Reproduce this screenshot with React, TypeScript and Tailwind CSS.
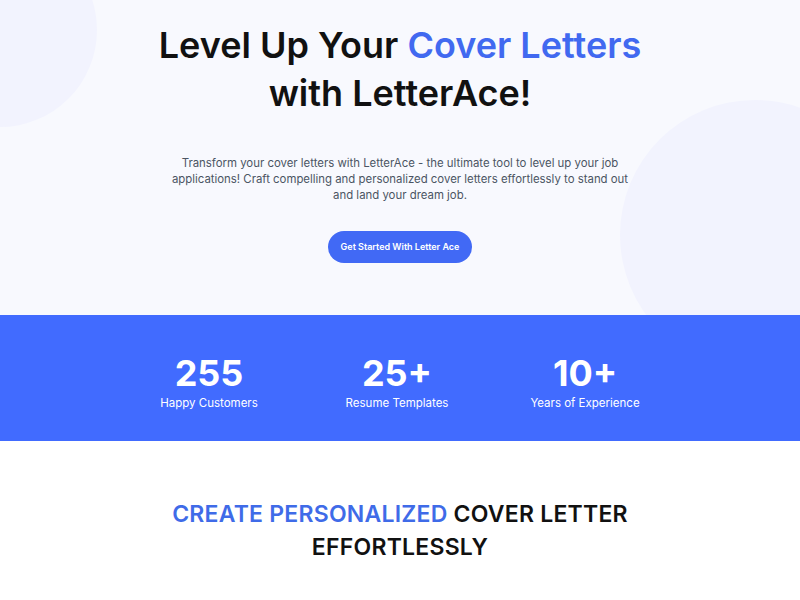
export default function App() {
  const stats = [
    { value: '255', label: 'Happy Customers' },
    { value: '25+', label: 'Resume Templates' },
    { value: '10+', label: 'Years of Experience' },
  ];

  return (
    <div className="min-h-[600px] bg-white" style={{ fontFamily: 'Inter, "Noto Sans", sans-serif' }}>
      <section className="relative h-[315px] overflow-hidden bg-[#f8f9fe]">
        <div className="absolute -left-[97px] -top-[67px] h-[194px] w-[194px] rounded-full bg-[#f2f3fe]" />
        <div className="absolute left-[620px] top-[100px] h-[270px] w-[270px] rounded-full bg-[#f2f3fe]" />
        <div className="relative flex flex-col items-center pt-[21px]">
          <h1 className="text-center text-[36px] font-semibold leading-[48px] text-[#111111]">
            Level Up Your <span className="text-[#4169f0]">Cover Letters</span>
            <br />
            with LetterAce!
          </h1>
          <p className="mt-[38px] w-[460px] text-center text-[11.4px] leading-[16px] text-[#4b5563]">
            Transform your cover letters with LetterAce - the ultimate tool to level up your job applications! Craft compelling and personalized cover letters effortlessly to stand out and land your dream job.
          </p>
          <button className="mt-[28px] h-[32px] rounded-full bg-[#4169f5] px-[13px] text-[9px] font-semibold text-white">
            Get Started With Letter Ace
          </button>
        </div>
      </section>

      <section className="h-[126px] bg-[#416bff]">
        <div className="ml-[115px] grid w-[564px] grid-cols-3 pt-[36px] text-white">
          {stats.map((s) => (
            <div key={s.label} className="flex flex-col items-center">
              <div className="text-[36px] font-bold leading-[44px]">{s.value}</div>
              <div className="text-[11.5px] leading-[16px]">{s.label}</div>
            </div>
          ))}
        </div>
      </section>

      <section className="flex justify-center pt-[57px]">
        <h2 className="w-[480px] text-center text-[23px] font-semibold uppercase leading-[33px] tracking-[0.01em] text-[#111111]">
          <span className="text-[#3f6be8]">Create Personalized</span> Cover Letter Effortlessly
        </h2>
      </section>
    </div>
  );
}
